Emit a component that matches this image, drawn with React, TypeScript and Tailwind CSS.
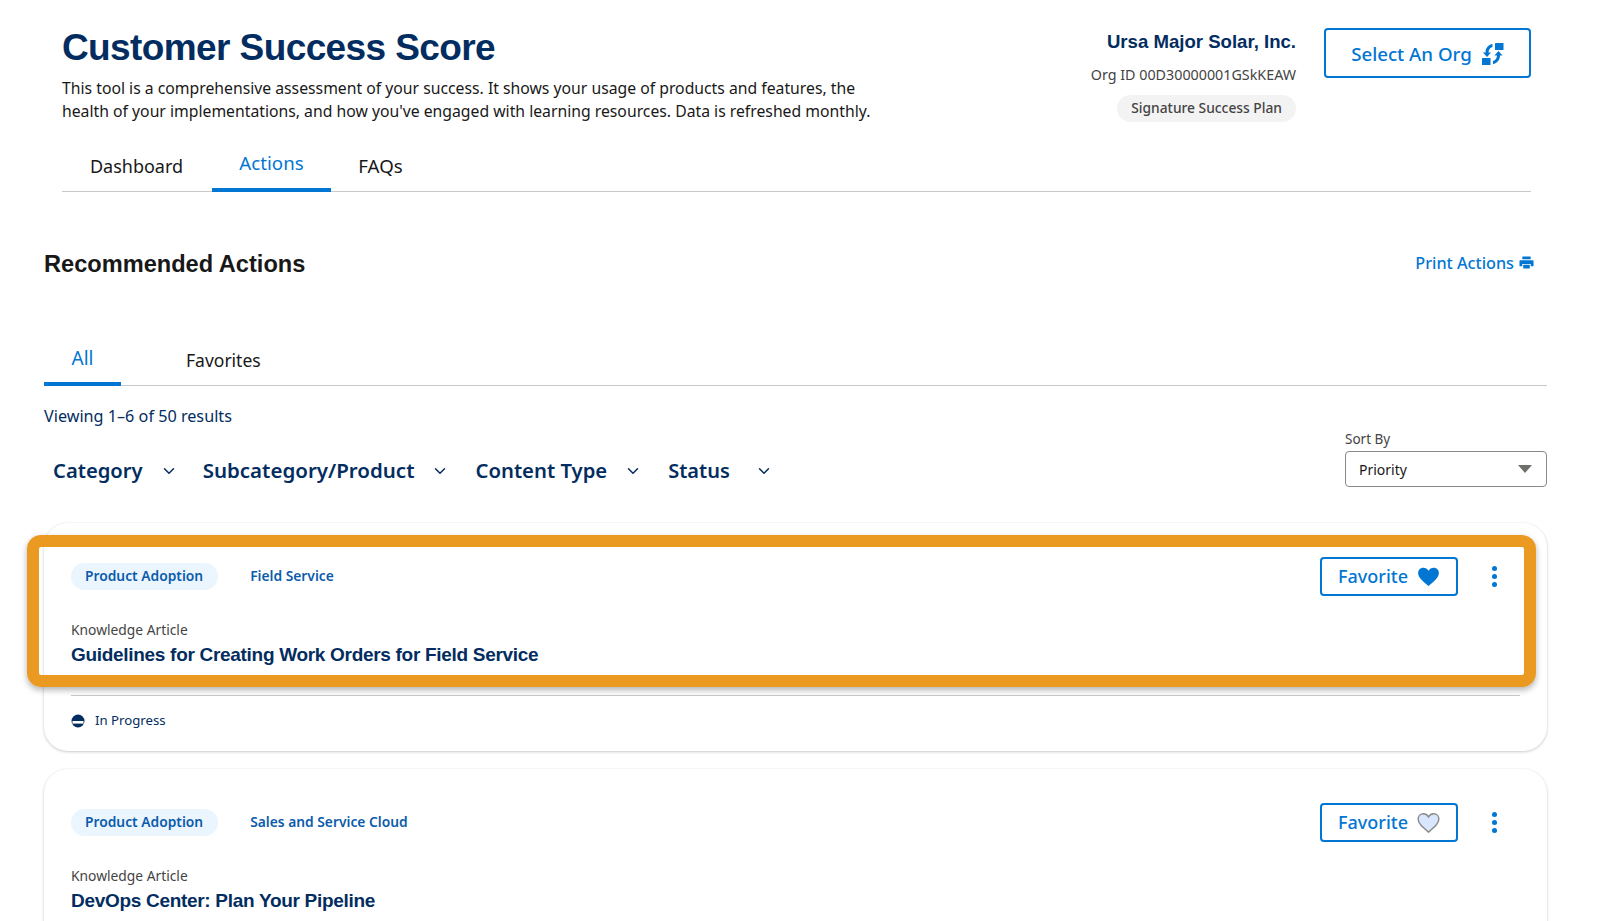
import { ChevronDown } from 'lucide-react';

const heading = "font-['Liberation_Sans',sans-serif]";

function OrgSwapIcon() {
  return (
    <svg viewBox="0 0 22 22" className="h-[22px] w-[22px] fill-[#0176d3]">
      <rect x="13" y="0" width="8.5" height="7" rx="0.5" />
      <rect x="0" y="15" width="8.5" height="7" rx="0.5" />
      <path d="M16.5 8 L20.5 12.5 H18 C18 17 15 20.5 11 21 V18 C13.5 17.5 15 15 15 12.5 H12.5 Z" />
      <path d="M5 14 L1 9.5 H3.5 C3.5 5 6.5 1.5 10.5 1 V4 C8 4.5 6.5 7 6.5 9.5 H9 Z" />
    </svg>
  );
}

function PrintIcon() {
  return (
    <svg viewBox="0 0 16 16" className="h-[15px] w-[15px] fill-[#0176d3]">
      <rect x="3.5" y="1.5" width="9" height="3" rx="0.5" />
      <path d="M1.5 5.5h13a1 1 0 0 1 1 1V12h-3V9.5h-9V12h-3V6.5a1 1 0 0 1 1-1z" />
      <rect x="4.5" y="10.5" width="7" height="4" rx="0.5" />
    </svg>
  );
}

function Heart({ filled }: { filled: boolean }) {
  return (
    <svg viewBox="0 0 24 22" className="h-[22px] w-[23px]">
      <path
        d="M12 20.5 C5 14.5 1.2 11.2 1.2 6.8 C1.2 3.6 3.6 1.4 6.6 1.4 C8.8 1.4 10.8 2.6 12 4.6 C13.2 2.6 15.2 1.4 17.4 1.4 C20.4 1.4 22.8 3.6 22.8 6.8 C22.8 11.2 19 14.5 12 20.5 Z"
        className={filled ? 'fill-[#0176d3]' : 'fill-[#d8e6fe] stroke-[#8a8a8a]'}
        strokeWidth={filled ? 0 : 1.5}
      />
    </svg>
  );
}

function Kebab() {
  return (
    <div className="flex w-[6px] flex-col gap-[3px]">
      <span className="h-[5px] w-[5px] rounded-full bg-[#0176d3]" />
      <span className="h-[5px] w-[5px] rounded-full bg-[#0176d3]" />
      <span className="h-[5px] w-[5px] rounded-full bg-[#0176d3]" />
    </div>
  );
}

function ProgressIcon() {
  return (
    <svg viewBox="0 0 14 14" className="h-[14px] w-[14px]">
      <circle cx="7" cy="7" r="6.5" fill="#032d60" />
      <rect x="1.5" y="7" width="11" height="2.6" fill="#ffffff" />
    </svg>
  );
}

function Filter({ label, size, gap, mr }: { label: string; size: string; gap: string; mr: string }) {
  return (
    <div className={`flex items-center ${gap} ${mr}`}>
      <span className={`${size} font-semibold text-[#032d60]`}>{label}</span>
      <ChevronDown className="h-[18px] w-[18px] text-[#032d60]" strokeWidth={2} />
    </div>
  );
}

function ActionCard({ category, title, favorite, status }: { category: string; title: string; favorite: boolean; status?: string }) {
  return (
    <div className={`rounded-[24px] bg-white px-[27px] shadow-[0_1px_3px_rgba(0,0,0,0.2),0_0_2px_rgba(0,0,0,0.05)] ${status ? '' : 'pb-[60px]'}`}>
      <div className="flex items-start justify-between pt-[34px]">
        <div className="mt-[6px] flex items-center text-[13.8px] font-semibold text-[#0b5cab]">
          <span className="flex h-[27px] items-center rounded-full bg-[#eaf5fe] pl-[14px] pr-[15px]">Product Adoption</span>
          <span className="ml-[32px]">{category}</span>
        </div>
        <div className="mr-[22px] flex items-center gap-[34px]">
          <button className="flex h-[39px] w-[138px] items-center justify-center gap-[9px] rounded-[4px] border-2 border-[#0176d3] text-[18px] font-medium text-[#0176d3]">
            Favorite
            <Heart filled={favorite} />
          </button>
          <Kebab />
        </div>
      </div>
      <div className="mt-[24px] text-[13.8px] leading-[20px] text-[#444444]">Knowledge Article</div>
      <div className={`${heading} mt-[3px] text-[19px] font-bold leading-[24px] tracking-[-0.3px] text-[#032d60]`}>{title}</div>
      {status && (
        <div className="mt-[28px] flex h-[56px] items-center gap-[10px] border-t border-[#c9c9c9] pb-[5px] pr-[1px] text-[13.2px] text-[#032d60]">
          <ProgressIcon />
          {status}
        </div>
      )}
    </div>
  );
}

export default function App() {
  return (
    <div className="h-[921px] overflow-hidden bg-white font-['Noto_Sans',sans-serif] text-[#181818]">
      <header className="pl-[62px] pr-[69px] pt-[28px]">
        <div className="flex justify-between">
          <div>
            <h1 className={`${heading} text-[37px] font-bold leading-[40px] tracking-[-0.6px] text-[#032d60]`}>Customer Success Score</h1>
            <p className="mt-[9px] w-[830px] text-[15.75px] leading-[23px]">
              This tool is a comprehensive assessment of your success. It shows your usage of products and features, the health of your implementations, and how you've engaged with learning resources. Data is refreshed monthly.
            </p>
          </div>
          <div className="flex items-start gap-[28px]">
            <div className="flex flex-col items-end">
              <div className={`${heading} text-[18.6px] font-bold leading-[28px] text-[#032d60]`}>Ursa Major Solar, Inc.</div>
              <div className="mt-[9px] text-[14.3px] leading-[20px] text-[#444444]">Org ID 00D30000001GSkKEAW</div>
              <span className="mt-[10px] flex h-[27px] items-center rounded-full bg-[#f3f3f3] px-[14px] text-[13.8px] font-medium text-[#444444]">Signature Success Plan</span>
            </div>
            <button className="flex h-[50px] w-[207px] items-center justify-center gap-[10px] rounded-[4px] border-2 border-[#0176d3] pt-[2px] text-[18.7px] font-medium text-[#0176d3]">
              Select An Org
              <OrgSwapIcon />
            </button>
          </div>
        </div>
        <nav className="mt-[19px] flex h-[50px] items-stretch border-b border-[#c9c9c9]">
          <div className="flex w-[150px] items-center justify-center pr-[1px] text-[18px]">Dashboard</div>
          <div className="-mb-px flex w-[119px] items-center justify-center border-b-4 border-[#0176d3] pb-[3px] text-[18.7px] text-[#0176d3]">Actions</div>
          <div className="flex w-[99px] items-center justify-center text-[18.7px]">FAQs</div>
        </nav>
      </header>

      <main className="pl-[44px] pr-[53px]">
        <div className="mt-[53px] flex items-center justify-between pr-[13px]">
          <h2 className={`${heading} pt-[2px] text-[23.6px] font-bold leading-[34px] text-[#181818]`}>Recommended Actions</h2>
          <div className="flex items-center gap-[5px] text-[16.2px] font-medium text-[#0176d3]">
            Print Actions
            <PrintIcon />
          </div>
        </div>

        <div className="mt-[53px] flex h-[52px] items-stretch border-b border-[#c9c9c9]">
          <div className="-mb-px flex w-[77px] items-center justify-center border-b-4 border-[#0176d3] text-[19px] text-[#0176d3]">All</div>
          <div className="ml-[65px] flex items-center pt-[2px] text-[17.5px]">Favorites</div>
        </div>

        <div className="mt-[19px] text-[16.2px] leading-[22px] text-[#032d60]">Viewing 1–6 of 50 results</div>

        <div className="mt-[2px] flex items-end justify-between">
          <div className="mb-[1px] flex items-center pl-[9px]">
            <Filter label="Category" size="text-[20.2px]" gap="gap-[17px]" mr="mr-[25px]" />
            <Filter label="Subcategory/Product" size="text-[20.5px]" gap="gap-[17px]" mr="mr-[26px]" />
            <Filter label="Content Type" size="text-[20.3px]" gap="gap-[17px]" mr="mr-[26px]" />
            <Filter label="Status" size="text-[20px]" gap="gap-[25px]" mr="" />
          </div>
          <div className="w-[202px]">
            <div className="text-[13.5px] leading-[20px] text-[#444444]">Sort By</div>
            <div className="mt-[2px] flex h-[36px] items-center justify-between rounded-[4px] border border-[#8a8a8a] pl-[13px] pr-[14px] text-[14px] text-[#181818]">
              Priority
              <span className="h-0 w-0 border-x-[7px] border-t-[8px] border-x-transparent border-t-[#706e6b]" />
            </div>
          </div>
        </div>

        <div className="relative mt-[36px]">
          <ActionCard category="Field Service" title="Guidelines for Creating Work Orders for Field Service" favorite status="In Progress" />
          <div className="absolute left-[-17px] right-[11px] top-[12px] h-[152px] rounded-[14px] border-[12px] border-[#ea9a21] shadow-[0_3px_6px_rgba(0,0,0,0.3)]" />
        </div>

        <div className="mt-[18px]">
          <ActionCard category="Sales and Service Cloud" title="DevOps Center: Plan Your Pipeline" favorite={false} />
        </div>
      </main>
    </div>
  );
}
